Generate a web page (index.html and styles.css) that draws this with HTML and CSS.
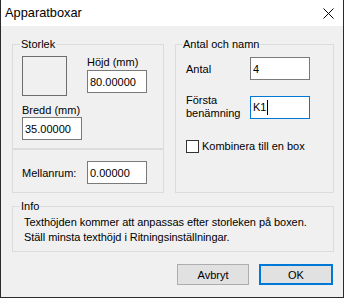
FILE: index.html
```html
<!DOCTYPE html>
<html lang="sv">
  <head>
    <meta charset="UTF-8" />
    <meta name="viewport" content="width=device-width, initial-scale=1.0" />
    <title>Apparatboxar</title>
    <link rel="stylesheet" href="styles.css">
  </head>
  <body>
    <div class="window">
      <div class="titlebar">
        <span class="title">Apparatboxar</span>
        <svg class="close" width="11" height="11" viewBox="0 0 11 11">
          <path d="M0.5 0.5 L10.5 10.5 M10.5 0.5 L0.5 10.5" stroke="#000" stroke-width="1" fill="none" />
        </svg>
      </div>

      <div class="client">
        <div class="top">
          <div class="left-col">
            <!-- Storlek -->
            <fieldset class="group size">
              <legend>Storlek</legend>
              <div class="size-row">
                <div class="preview"></div>
                <div class="stack">
                  <label for="hojd">Höjd (mm)</label>
                  <input type="text" id="hojd" class="textbox" value="80.00000" />
                </div>
              </div>
              <label for="bredd" class="bredd-label">Bredd (mm)</label>
              <input type="text" id="bredd" class="textbox" value="35.00000" />
            </fieldset>

            <div class="group spacing">
              <label for="mellanrum" class="spacing-label">Mellanrum:</label>
              <input type="text" id="mellanrum" class="textbox" value="0.00000" />
            </div>
          </div>

          <!-- Antal och namn -->
          <fieldset class="group names">
            <legend>Antal och namn</legend>
            <div class="row">
              <label for="antal" class="row-label">Antal</label>
              <input type="text" id="antal" class="textbox" value="4" />
            </div>
            <div class="row row-name">
              <label class="row-label two-line">Första<br />benämning</label>
              <div class="textbox focused">K1<span class="caret"></span></div>
            </div>
            <div class="row row-check">
              <span class="checkbox"></span>
              <span>Kombinera till en box</span>
            </div>
          </fieldset>
        </div>

        <fieldset class="group info">
          <legend>Info</legend>
          <p>Texthöjden kommer att anpassas efter storleken på boxen.<br />
          Ställ minsta texthöjd i Ritningsinställningar.</p>
        </fieldset>

        <div class="buttons">
          <button type="button" class="btn">Avbryt</button>
          <button type="button" class="btn default">OK</button>
        </div>
      </div>
    </div>
  </body>
</html>
```

FILE: styles.css
```css
body {
  margin: 0;
  font-family: "Liberation Sans", Arial, sans-serif;
  font-size: 11px;
  line-height: 14px;
  color: #000;
}
.window {
  width: 344px;
  height: 298px;
  box-sizing: border-box;
  border: 1px solid #2b2b2b;
  border-top: none;
  background-color: #f0f0f0;
  display: flex;
  flex-direction: column;
}
.titlebar {
  height: 26px;
  flex: none;
  background-color: #fff;
  display: flex;
  align-items: center;
  justify-content: space-between;
  padding: 0 9px 0 4px;
}
.title {
  font-size: 12.8px;
}
.close {
  display: block;
}
.client {
  padding: 11px 9px 0 11px;
}
.top {
  display: flex;
  gap: 11px;
}
.left-col {
  width: 152px;
  display: flex;
  flex-direction: column;
}
.group {
  margin: 0;
  min-width: 0;
  border: 1px solid #dcdcdc;
}
.group legend {
  padding: 0 1px;
  line-height: 14px;
}
.size {
  padding: 4px 9px 8px 9px;
}
.size legend {
  margin-left: -2px;
}
.size-row {
  display: flex;
}
.preview {
  width: 45px;
  height: 40px;
  margin-top: 1px;
  box-sizing: border-box;
  border: 1px solid #6d6d6d;
}
.stack {
  display: flex;
  flex-direction: column;
  margin-left: 20px;
}
.stack .textbox {
  margin-top: 1px;
}
.bredd-label {
  display: block;
  margin-top: 7px;
}
.textbox {
  display: block;
  width: 60px;
  height: 23px;
  box-sizing: border-box;
  margin: 0;
  padding: 0 2px;
  border: 1px solid #7a7a7a;
  background-color: #fff;
  font: inherit;
  color: #000;
}
.spacing {
  display: flex;
  align-items: center;
  padding: 11px 9px 8px 9px;
}
.spacing-label {
  width: 65px;
}
.names {
  width: 159px;
  box-sizing: border-box;
  padding: 6px 10px 0 10px;
}
.names legend {
  margin-left: -4px;
}
.row {
  display: flex;
  align-items: center;
}
.row-label {
  width: 64px;
}
.two-line {
  line-height: 13px;
}
.row-name {
  margin-top: 14px;
}
.focused {
  border-color: #0078d7;
  display: flex;
  align-items: center;
}
.caret {
  width: 1px;
  height: 15px;
  margin-left: 1px;
  background-color: #000;
}
.row-check {
  margin-top: 19px;
  gap: 3px;
}
.checkbox {
  width: 13px;
  height: 13px;
  box-sizing: border-box;
  border: 1px solid #333;
  background-color: #fff;
}
.info {
  margin-top: 6px;
  padding: 2px 11px 6px 11px;
}
.info legend {
  margin-left: -4px;
}
.info p {
  margin: 0;
  line-height: 15px;
  letter-spacing: -0.05px;
}
.buttons {
  display: flex;
  justify-content: flex-end;
  gap: 10px;
  margin-top: 12px;
  padding-right: 1px;
}
.btn {
  width: 72px;
  height: 21px;
  box-sizing: border-box;
  border: 1px solid #adadad;
  background-color: #e1e1e1;
  font: inherit;
  color: #000;
  padding: 0;
}
.btn.default {
  width: 74px;
  border: 2px solid #0078d7;
}
```
